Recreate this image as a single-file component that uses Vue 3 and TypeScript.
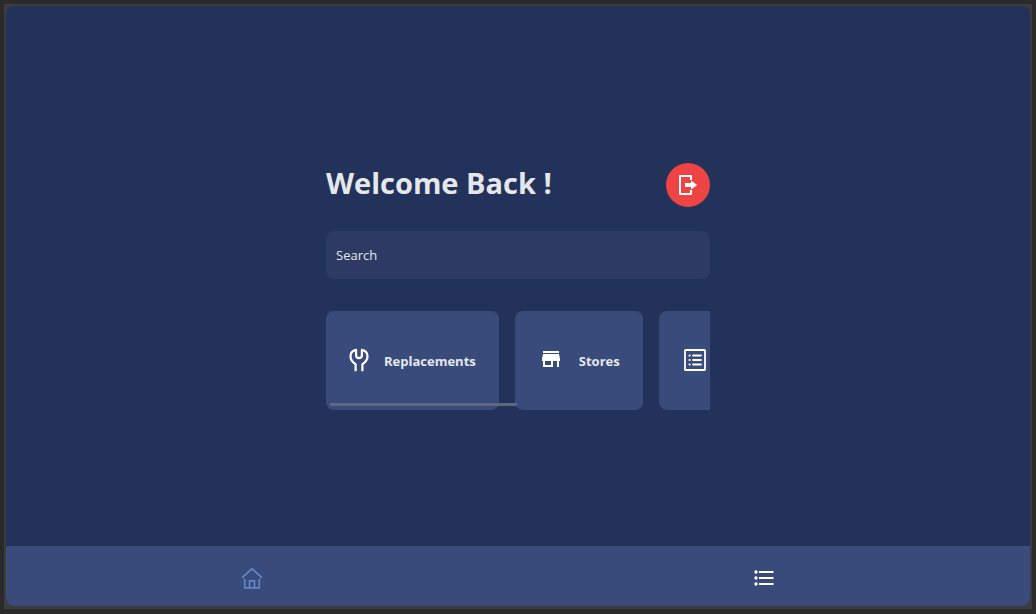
<script setup lang="ts">
import { ref } from 'vue'

type IconName = 'wrench' | 'store' | 'list'

interface Shortcut {
  icon: IconName
  label?: string
}

const query = ref('')
const shortcuts: Shortcut[] = [
  { icon: 'wrench', label: 'Replacements' },
  { icon: 'store', label: 'Stores' },
  { icon: 'list' },
]
</script>

<template>
  <div class="window">
    <div class="frame">
      <div class="app">
        <main class="main">
          <div class="content">
            <header class="header">
              <h1 class="title">Welcome Back !</h1>
              <button class="logout" type="button" aria-label="Log out">
                <svg viewBox="0 0 24 24" width="24" height="24" aria-hidden="true">
                  <path
                    d="M15 7V3H4v18h11v-4"
                    fill="none"
                    stroke="currentColor"
                    stroke-width="2"
                    stroke-linejoin="round"
                  />
                  <path d="M9 10h6V7.4l6.2 4.6-6.2 4.6V14H9z" fill="currentColor" />
                </svg>
              </button>
            </header>

            <input v-model="query" class="search" type="text" placeholder="Search" aria-label="Search" />

            <div class="shelf">
              <div class="cards">
                <button v-for="item in shortcuts" :key="item.icon" class="card" type="button">
                  <svg
                    v-if="item.icon === 'wrench'"
                    class="icon narrow"
                    viewBox="0 0 18 24"
                    aria-hidden="true"
                  >
                    <path
                      d="M5.6 24.200V17.200C2.400 15.200 .500 12.600 .500 9.300 .500 6.200 2.400 3.600 6.100 2.900V8.300c0 1.800 1.100 2.900 2.900 2.900s2.900-1.100 2.900-2.900V2.900c3.700 .7 5.600 3.300 5.600 6.400 0 3.300-1.900 5.900-5.100 7.900v7"
                      fill="none"
                      stroke="currentColor"
                      stroke-width="2.200"
                      stroke-linejoin="round"
                    />
                  </svg>
                  <svg
                    v-else-if="item.icon === 'store'"
                    class="icon"
                    viewBox="0 0 24 24"
                    aria-hidden="true"
                  >
                    <path
                      d="M20 4H4v2h16V4zm1 10v-2l-1-5H4l-1 5v2h1v6h10v-6h4v6h2v-6h1zm-9 4H6v-4h6v4z"
                      fill="currentColor"
                    />
                  </svg>
                  <svg v-else class="icon" viewBox="0 0 24 24" aria-hidden="true">
                    <g fill="none" stroke="currentColor" stroke-width="1.8">
                      <rect x="2" y="3" width="20" height="20" rx=".6" />
                      <path d="M10 8.500h8M10 13h8M10 17.500h8" stroke-linecap="round" />
                    </g>
                    <g fill="currentColor">
                      <circle cx="6.600" cy="8.500" r="1.100" />
                      <circle cx="6.600" cy="13" r="1.100" />
                      <circle cx="6.600" cy="17.500" r="1.100" />
                    </g>
                  </svg>
                  <span v-if="item.label" class="label">{{ item.label }}</span>
                </button>
              </div>
              <div class="thumb"></div>
            </div>
          </div>
        </main>

        <nav class="nav">
          <a class="tab home" href="#home" aria-label="Home">
            <svg viewBox="0 0 24 24" width="24" height="24" aria-hidden="true">
              <path
                d="M2.500 11.300 12 2.700l9.500 8.600M4.700 13.500v8.300h14.600v-8.300M9.500 21.800v-7h5v7"
                fill="none"
                stroke="currentColor"
                stroke-width="1.700"
                stroke-linecap="round"
                stroke-linejoin="round"
              />
            </svg>
          </a>
          <a class="tab" href="#menu" aria-label="Menu">
            <svg viewBox="0 0 24 24" width="24" height="24" aria-hidden="true">
              <path d="M7 5h14.500v2H7zM7 11h14.500v2H7zM7 17h14.500v2H7z" fill="currentColor" />
              <g fill="currentColor">
                <circle cx="4" cy="6" r="1.700" />
                <circle cx="4" cy="12" r="1.700" />
                <circle cx="4" cy="18" r="1.700" />
              </g>
            </svg>
          </a>
        </nav>
      </div>
    </div>
  </div>
</template>

<style>
body {
  margin: 0;
}
</style>

<style scoped>
.window {
  box-sizing: border-box;
  display: flex;
  min-height: 100vh;
  padding: 4px 4px 5px;
  background: #2a2a2a;
  font-family: 'Open Sans', 'Noto Sans', sans-serif;
  color: #e5e7eb;
}

.frame {
  display: flex;
  flex: 1;
  min-width: 0;
  padding: 2px 2px 3px;
  background: #3c3c3c;
}

.app {
  display: flex;
  flex: 1;
  flex-direction: column;
  min-width: 0;
  overflow: hidden;
  border-radius: 8px;
  background: #23325b;
}

.main {
  display: flex;
  flex: 1;
  align-items: center;
  justify-content: center;
  padding: 20px 16px 0;
}

.content {
  width: 100%;
  max-width: 384px;
}

.header {
  display: flex;
  justify-content: space-between;
  margin-bottom: 24px;
}

.title {
  margin: 0;
  font-size: 29px;
  font-weight: 700;
  line-height: 40px;
}

.logout {
  display: grid;
  place-items: center;
  width: 44px;
  height: 44px;
  padding: 0;
  border: 0;
  border-radius: 50%;
  background: #ef4444;
  color: #fff;
}

.search {
  box-sizing: border-box;
  display: block;
  width: 100%;
  height: 48px;
  margin-bottom: 32px;
  padding: 0 10px;
  border: 0;
  border-radius: 8px;
  background: #2d3b64;
  color: inherit;
  font: 13px 'Open Sans', 'Noto Sans', sans-serif;
}

.search::placeholder {
  color: #e5e7eb;
  opacity: 1;
}

.shelf {
  position: relative;
  overflow: hidden;
}

.cards {
  display: flex;
  gap: 16px;
}

.card {
  display: flex;
  flex: none;
  align-items: center;
  gap: 16px;
  height: 99px;
  padding: 0 23px 0 24px;
  border: 0;
  border-radius: 8px;
  background: #394b7a;
  color: #fff;
  font: 700 13px/20px 'Open Sans', 'Noto Sans', sans-serif;
}

.icon {
  flex: none;
  width: 24px;
  height: 24px;
  margin-bottom: 2px;
}

.narrow {
  width: 18px;
  overflow: visible;
}

.label {
  padding-top: 2px;
  color: #e5e7eb;
}

.thumb {
  position: absolute;
  bottom: 4px;
  left: 4px;
  width: 187px;
  height: 3px;
  background: #5f6680;
}

.nav {
  display: grid;
  grid-template-columns: 1fr 1fr;
  height: 60px;
  background: #394b7a;
}

.tab {
  display: grid;
  place-items: center;
  padding-top: 4px;
  margin-right: 20px;
  color: #fff;
}

.home {
  color: #6287c5;
}
</style>
